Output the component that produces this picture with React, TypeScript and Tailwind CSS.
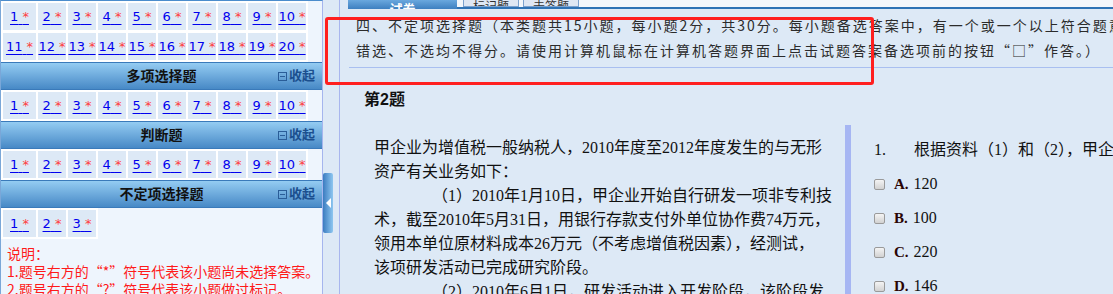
import React from 'react';

const cjk = "font-['DejaVu_Sans','Noto_Sans_CJK_SC',sans-serif]";

const Cell = ({ n }: { n: number }) => (
  <div className="h-[27px] bg-[#dde9f6] flex items-center justify-center">
    <a className="text-[13px] leading-none text-[#0000ee] underline decoration-[#0000ee] underline-offset-[3px] cursor-pointer">
      {n} <span className="text-[#ff4040]">*</span>
    </a>
  </div>
);

const NumGrid = ({ from, to, cols }: { from: number; to: number; cols: string }) => {
  const nums: number[] = [];
  for (let i = from; i <= to; i++) nums.push(i);
  return (
    <div className={`grid w-fit ${cols} gap-x-[2px] gap-y-[3px] bg-white p-[2px]`}>
      {nums.map(n => (
        <Cell key={n} n={n} />
      ))}
    </div>
  );
};

const SectionHeader = ({ title }: { title: string }) => (
  <div className="h-[28px] flex items-center border-y border-[#3a7aba] bg-linear-to-b from-[#94ccf2] to-[#4789c6]">
    <div className="w-[44px]" />
    <div className="flex-1 text-center text-[14px] font-bold text-[#111]">{title}</div>
    <div className="w-[44px] flex items-center gap-[2px] text-[13px] font-bold text-[#1b4f8e]">
      <span className="w-[9px] h-[9px] border border-[#2a5d98] flex items-center justify-center">
        <span className="w-[5px] h-px bg-[#2a5d98]" />
      </span>
      收起
    </div>
  </div>
);

const Option = ({ letter, value }: { letter: string; value: string }) => (
  <div className="h-[24px] flex items-center">
    <span className="w-[11px] h-[11px] rounded-[2px] border border-[#9a9a9a] bg-linear-to-b from-[#f4f4f4] to-[#d2d2d2]" />
    <span className="ml-[9px] text-[15px] font-bold text-[#2a0505] font-['Liberation_Serif',serif]">{letter}.</span>
    <span className="ml-[5px] text-[16px] text-[#111] font-['Liberation_Serif',serif]">{value}</span>
  </div>
);

export default function App() {
  return (
    <div className="relative w-[1113px] h-[294px] overflow-hidden flex bg-[#dde9f6]">
      {/* left navigation panel */}
      <div className={`w-[323px] shrink-0 h-full bg-[#eef5fd] border-l border-r border-t border-l-[#7aa7d8] border-r-[#a5b5ee] border-t-[#4b8ccc] ${cjk}`}>
        <NumGrid from={1} to={20} cols="grid-cols-[33px_repeat(9,28px)]" />
        <SectionHeader title="多项选择题" />
        <NumGrid from={1} to={10} cols="grid-cols-[33px_repeat(9,28px)]" />
        <SectionHeader title="判断题" />
        <NumGrid from={1} to={10} cols="grid-cols-[33px_repeat(9,28px)]" />
        <SectionHeader title="不定项选择题" />
        <NumGrid from={1} to={3} cols="grid-cols-[33px_28px_28px]" />
        <div className="mt-[5px] pl-[6px] text-[14px] leading-[18px] text-[#ff1a1a] font-['Noto_Sans_CJK_SC',sans-serif]">
          <div>说明：</div>
          <div>1.题号右方的“*”符号代表该小题尚未选择答案。</div>
          <div>2.题号右方的“?”符号代表该小题做过标记。</div>
        </div>
      </div>

      {/* collapse gutter */}
      <div className="w-[16px] shrink-0 pt-[173px]">
        <div className="w-[10px] h-[60px] rounded-[2px] bg-linear-to-r from-[#3b7cc0] to-[#8ec7f0] flex items-center justify-center">
          <span className="w-0 h-0 border-y-[5px] border-y-transparent border-r-[5px] border-r-white" />
        </div>
      </div>

      {/* main content */}
      <div className="flex-1 min-w-0 h-full border-l border-[#a8b6ee] flex flex-col overflow-hidden font-['Liberation_Sans','Noto_Sans_CJK_SC',sans-serif]">
        <div className="h-[9px] shrink-0 flex bg-[#f4f7fb]">
          <div className="w-[8px] bg-[#dde9f6]" />
          <div className="w-[109px] h-[9px] overflow-hidden bg-linear-to-b from-[#6aa8de] to-[#3d7fc0] flex items-end justify-center">
            <span className="text-[13px] leading-[14px] font-bold text-white translate-y-[8px]">试卷</span>
          </div>
          <div className="flex-1 flex flex-col">
            <div className="h-[7px] flex gap-[4px] pl-[6px]">
              <div className="w-[56px] h-[7px] overflow-hidden bg-[#dfe7f3] border-x border-b border-[#7da2ce] flex items-end justify-center">
                <span className="text-[12px] leading-[12px] text-[#333] translate-y-[7px]">标记题</span>
              </div>
              <div className="w-[56px] h-[7px] overflow-hidden bg-[#dfe7f3] border-x border-b border-[#7da2ce] flex items-end justify-center">
                <span className="text-[12px] leading-[12px] text-[#333] translate-y-[7px]">未答题</span>
              </div>
            </div>
            <div className="h-[2px] bg-[#2f73b5]" />
          </div>
        </div>

        <div className="ml-[9px] pl-[7px] pt-[4px] pb-[4px] border-b border-[#a9bff0] text-[14px] leading-[25px] tracking-[2px] text-[#2b2b2b] whitespace-nowrap font-['Noto_Sans_CJK_SC',sans-serif]">
          <div>四、不定项选择题（本类题共15小题，每小题2分，共30分。每小题备选答案中，有一个或一个以上符合题意的正确答案。每小题全部选对得满分，少选得相应分值，多选、</div>
          <div>错选、不选均不得分。请使用计算机鼠标在计算机答题界面上点击试题答案备选项前的按钮“□”作答。）</div>
        </div>

        <div className="mt-[20px] pl-[24px] text-[16px] leading-[24px] font-bold text-[#111]">
          第2题
        </div>

        <div className="mt-[13px] flex flex-1 min-h-0">
          <div className="w-[505px] shrink-0 pl-[34px] pt-[11px] text-[16px] leading-[24px] text-[#111] whitespace-nowrap font-['Liberation_Serif','Noto_Sans_CJK_SC',serif]">
            <div>甲企业为增值税一般纳税人，2010年度至2012年度发生的与无形</div>
            <div>资产有关业务如下：</div>
            <div className="pl-[58px]">（1）2010年1月10日，甲企业开始自行研发一项非专利技</div>
            <div>术，截至2010年5月31日，用银行存款支付外单位协作费74万元，</div>
            <div>领用本单位原材料成本26万元（不考虑增值税因素），经测试，</div>
            <div>该项研发活动已完成研究阶段。</div>
            <div className="pl-[58px]">（2）2010年6月1日，研发活动进入开发阶段，该阶段发</div>
          </div>
          <div className="w-[6px] shrink-0 bg-[#a6b6f3]" />
          <div className="flex-1 pl-[23px] pt-[13px] flex flex-col gap-[10px] whitespace-nowrap font-['Liberation_Serif','Noto_Sans_CJK_SC',serif]">
            <div className="h-[24px] flex items-center text-[16px] text-[#111]">
              <span className="w-[40px]">1.</span>
              <span>根据资料（1）和（2），甲企业自行研发专利技术的研究阶段</span>
            </div>
            <Option letter="A" value="120" />
            <Option letter="B" value="100" />
            <Option letter="C" value="220" />
            <Option letter="D" value="146" />
          </div>
        </div>
      </div>

      {/* annotation box */}
      <div className="absolute left-[325px] top-[17px] w-[549px] h-[68px] border-[3px] border-[#ff1f1f] rounded-[3px] pointer-events-none" />
    </div>
  );
}
